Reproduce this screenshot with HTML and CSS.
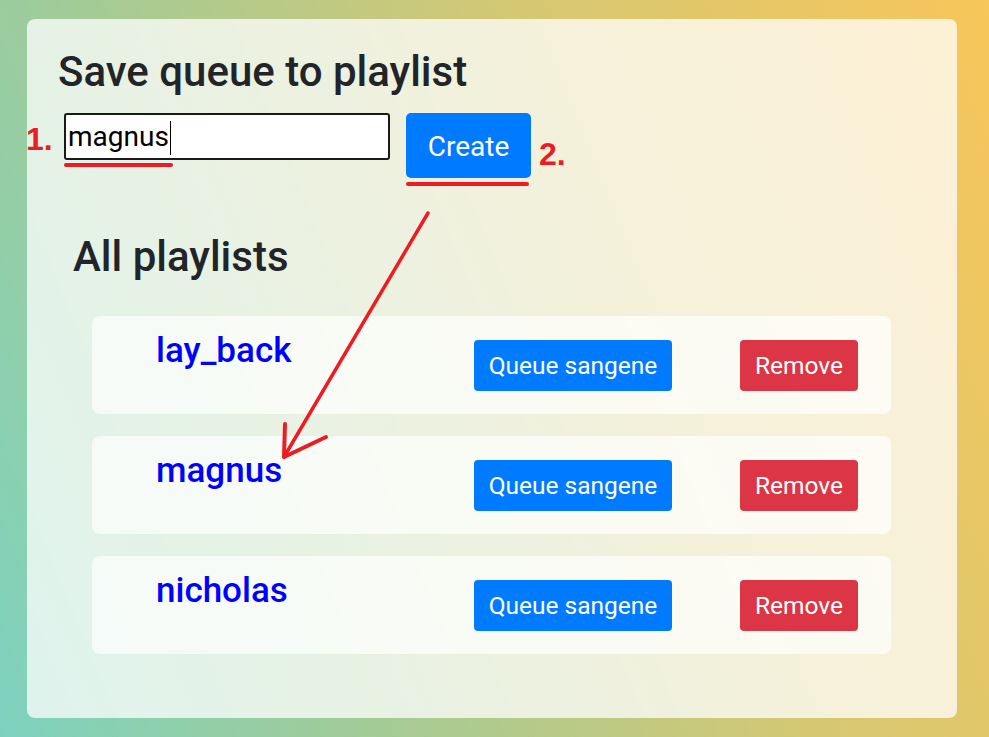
FILE: index.html
```html
<!DOCTYPE html>
<html>
<head>
<meta charset="utf-8">
<link rel="stylesheet" href="styles.css">
</head>
<body>
<div class="card">
  <h1 class="title">Save queue to playlist</h1>
  <div class="create-row">
    <div class="input">magnus<span class="caret"></span></div>
    <button class="btn btn-primary btn-create">Create</button>
  </div>
  <h2 class="subtitle">All playlists</h2>
  <div class="list">
    <div class="item">
      <div class="name">lay_back</div>
      <button class="btn btn-primary btn-queue">Queue sangene</button>
      <button class="btn btn-danger btn-remove">Remove</button>
    </div>
    <div class="item">
      <div class="name">magnus</div>
      <button class="btn btn-primary btn-queue">Queue sangene</button>
      <button class="btn btn-danger btn-remove">Remove</button>
    </div>
    <div class="item">
      <div class="name">nicholas</div>
      <button class="btn btn-primary btn-queue">Queue sangene</button>
      <button class="btn btn-danger btn-remove">Remove</button>
    </div>
  </div>
</div>
<div class="ann ann-1">1.</div>
<div class="ann ann-2">2.</div>
<svg class="overlay" width="989" height="737" viewBox="0 0 989 737">
  <g stroke="#ed1c24" stroke-linecap="round" fill="none">
    <line x1="66" y1="165" x2="171" y2="165" stroke-width="4"/>
    <line x1="408" y1="184" x2="527" y2="184" stroke-width="4"/>
    <line x1="428" y1="213" x2="284" y2="457" stroke-width="3.5"/>
    <polyline points="285,424 284,457 326,437" stroke-width="4" stroke-linejoin="round"/>
  </g>
</svg>
</body>
</html>
```
FILE: styles.css
```css
html, body {
  margin: 0;
  padding: 0;
}
body {
  width: 989px;
  height: 737px;
  overflow: hidden;
  background: linear-gradient(68deg, #7dd2bf 0%, #a4cb95 30%, #d3c874 62%, #f8c65a 100%);
  font-family: Roboto, "Noto Sans", sans-serif;
  color: #212529;
  position: relative;
  padding-top: 19px;
  box-sizing: border-box;
}
.card {
  margin-left: 27px;
  width: 930px;
  height: 699px;
  box-sizing: border-box;
  border-radius: 8px;
  background: rgba(255, 255, 255, 0.74);
  padding: 28px 0 0 31px;
}
.title {
  margin: 0;
  font-size: 42px;
  font-weight: 500;
  line-height: 50px;
}
.create-row {
  display: flex;
  align-items: flex-start;
  margin-top: 16px;
  margin-left: 6px;
  gap: 16px;
}
.input {
  width: 326px;
  height: 47px;
  box-sizing: border-box;
  border: 2px solid #1a1a1a;
  border-radius: 3px;
  background: #fff;
  color: #000;
  font-family: Roboto, sans-serif;
  font-size: 28px;
  line-height: 43px;
  padding-left: 2px;
  display: flex;
  align-items: center;
}
.caret {
  display: inline-block;
  width: 1px;
  height: 34px;
  background: #000;
  margin-left: 1px;
  margin-top: 2px;
}
.btn {
  border: none;
  color: #fff;
  font-family: Roboto, sans-serif;
  cursor: pointer;
  padding: 0;
}
.btn-primary { background: #007bff; }
.btn-danger { background: #dc3545; }
.btn-create {
  width: 125px;
  height: 65px;
  border-radius: 5px;
  font-size: 28px;
  padding-top: 2px;
}
.subtitle {
  margin: 54px 0 0 15px;
  font-size: 42px;
  font-weight: 500;
  line-height: 50px;
}
.list {
  margin: 34px 0 0 34px;
  display: flex;
  flex-direction: column;
  gap: 22px;
}
.item {
  width: 799px;
  height: 98px;
  box-sizing: border-box;
  border-radius: 8px;
  background: rgba(255, 255, 255, 0.68);
  display: flex;
  align-items: center;
  padding-left: 64px;
}
.name {
  width: 318px;
  align-self: flex-start;
  margin-top: 14px;
  color: #0000ff;
  font-size: 35px;
  font-weight: 500;
  line-height: 42px;
}
.btn-queue {
  width: 198px;
  height: 51px;
  border-radius: 4px;
  font-size: 24.5px;
  margin-right: 68px;
}
.btn-remove {
  width: 118px;
  height: 51px;
  border-radius: 4px;
  font-size: 24.5px;
}
.ann {
  position: absolute;
  color: #ed1c24;
  font-family: "Liberation Sans", Arial, sans-serif;
  font-weight: 700;
  font-size: 32px;
  line-height: 32px;
}
.ann-1 { left: 26px; top: 123px; }
.ann-2 { left: 539px; top: 138px; }
.overlay {
  position: absolute;
  left: 0;
  top: 0;
  pointer-events: none;
}
```
